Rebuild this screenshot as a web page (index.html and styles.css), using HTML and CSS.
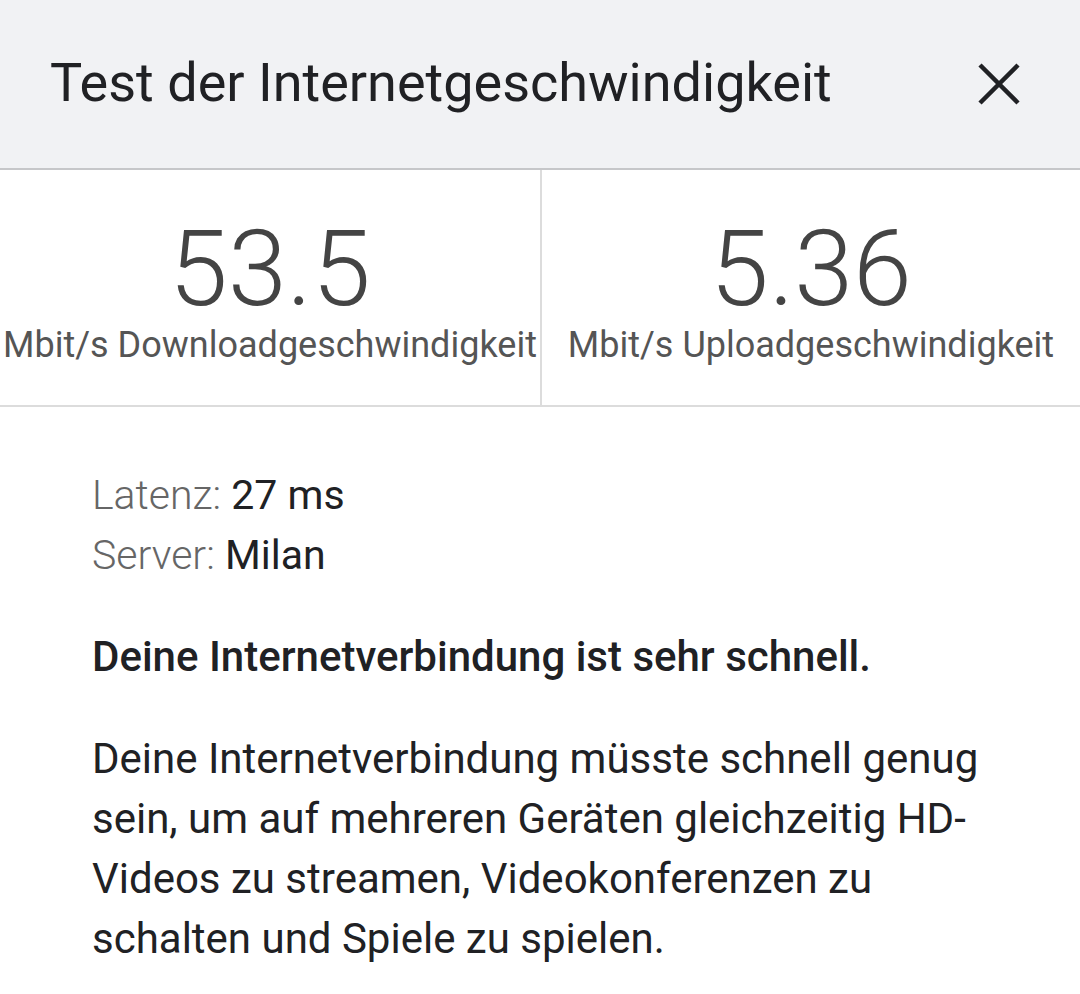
FILE: index.html
```html
<!DOCTYPE html>
<html>

<head>
    <title>Test der Internetgeschwindigkeit</title>
    <link rel="stylesheet" href="styles.css">
</head>

<body>
    <div class="header">
        <h1>Test der Internetgeschwindigkeit</h1>
        <button class="close-btn" aria-label="Schließen">
            <svg width="42" height="42" viewBox="0 0 42 42">
                <path d="M2 2 L40 40 M40 2 L2 40" stroke="#202124" stroke-width="4.5" fill="none"/>
            </svg>
        </button>
    </div>

    <div class="stats">
        <div class="stat">
            <div class="stat-value">53.5</div>
            <div class="stat-label">Mbit/s Downloadgeschwindigkeit</div>
        </div>
        <div class="stat">
            <div class="stat-value">5.36</div>
            <div class="stat-label">Mbit/s Uploadgeschwindigkeit</div>
        </div>
    </div>

    <div class="details">
        <div class="meta">
            <div><span class="meta-key">Latenz:</span> 27 ms</div>
            <div><span class="meta-key">Server:</span> Milan</div>
        </div>
        <p class="verdict">Deine Internetverbindung ist sehr schnell.</p>
        <p class="info">Deine Internetverbindung müsste schnell genug sein, um auf mehreren Geräten gleichzeitig HD-Videos zu streamen, Videokonferenzen zu schalten und Spiele zu spielen.</p>
    </div>
</body>

</html>
```

FILE: styles.css
```css
body {
    margin: 0;
    font-family: Roboto, "Noto Sans", Arial, sans-serif;
    background: #fff;
    color: #202124;
}

.header {
    display: flex;
    align-items: center;
    justify-content: space-between;
    height: 168px;
    padding: 0 60px 0 50px;
    background: #f1f2f4;
    border-bottom: 2px solid #c6c7c9;
}

.header h1 {
    margin: 0 0 4px;
    font-size: 54px;
    font-weight: 400;
}

.close-btn {
    background: none;
    border: none;
    padding: 0;
    display: flex;
}

.stats {
    display: grid;
    grid-template-columns: 1fr 1fr;
    border-bottom: 2px solid #dcdcdc;
}

.stat {
    height: 235px;
    display: flex;
    flex-direction: column;
    align-items: center;
    justify-content: center;
    white-space: nowrap;
}

.stat + .stat {
    border-left: 2px solid #dcdcdc;
}

.stat-value {
    font-size: 106px;
    font-weight: 300;
    color: #444;
    line-height: 1;
    margin-top: 6px;
}

.stat-label {
    font-size: 36px;
    font-weight: 400;
    color: #555;
    margin-top: 2px;
}

.details {
    padding: 58px 92px 0;
}

.meta {
    font-size: 41px;
    line-height: 60px;
}

.meta-key {
    color: #666;
    font-weight: 300;
}

.verdict {
    margin: 42px 0 0;
    font-size: 42px;
    font-weight: 500;
    line-height: 60px;
}

.info {
    margin: 42px 0 0;
    font-size: 42px;
    line-height: 60px;
}
```
